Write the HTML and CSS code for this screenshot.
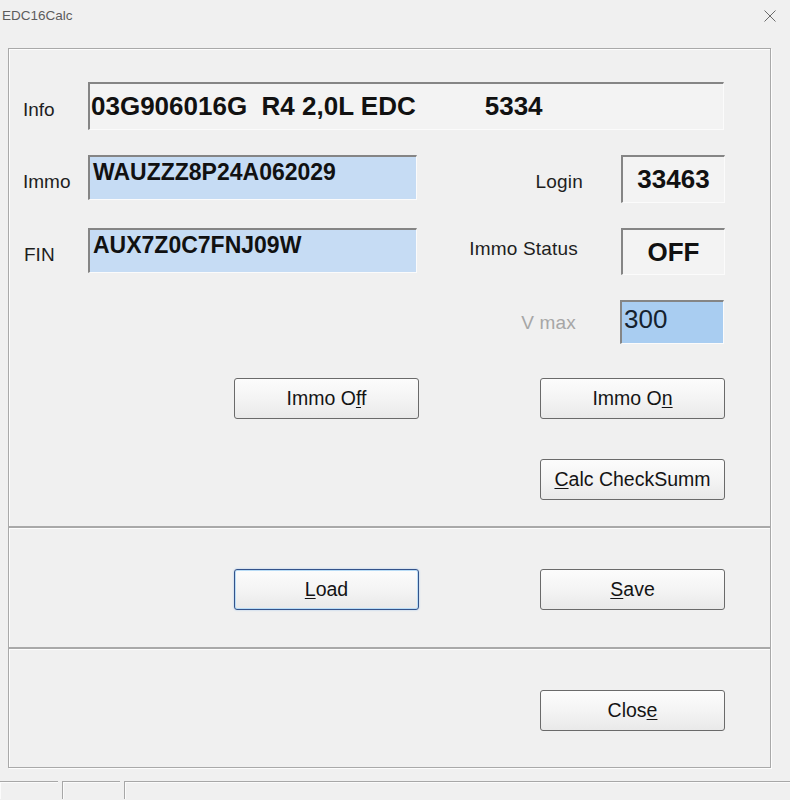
FILE: index.html
```html
<!DOCTYPE html>
<html>
<head>
<meta charset="utf-8">
<title>EDC16Calc</title>
<link rel="stylesheet" href="styles.css">
</head>
<body>
<div class="window">
  <div class="titlebar">
    <span class="title">EDC16Calc</span>
    <svg class="close-x" width="12" height="12" viewBox="0 0 12 12"><path d="M0.5 0.5 L11.5 11.5 M11.5 0.5 L0.5 11.5" stroke="#6a6a6a" stroke-width="1" fill="none"/></svg>
  </div>
  <div class="content">
    <div class="group group-main">
      <div class="row row-info">
        <span class="label label-info">Info</span>
        <div class="field field-info">03G906016G&nbsp;&nbsp;R4 2,0L EDC<span class="info-num">5334</span></div>
      </div>
      <div class="row row-immo">
        <span class="label label-left label-immo">Immo</span>
        <div class="field field-edit field-long">WAUZZZ8P24A062029</div>
        <span class="label label-right label-login">Login</span>
        <div class="field field-value">33463</div>
      </div>
      <div class="row row-fin">
        <span class="label label-left label-fin">FIN</span>
        <div class="field field-edit field-long">AUX7Z0C7FNJ09W</div>
        <span class="label label-right label-status">Immo Status</span>
        <div class="field field-value field-status">OFF</div>
      </div>
      <div class="row row-vmax">
        <span class="label label-right label-vmax">V max</span>
        <div class="field field-vmax">300</div>
      </div>
      <div class="row row-buttons">
        <button class="btn btn-left">Immo O<u>f</u>f</button>
        <button class="btn btn-right">Immo O<u>n</u></button>
      </div>
      <div class="row row-calc">
        <button class="btn btn-right btn-calc"><u>C</u>alc CheckSumm</button>
      </div>
    </div>
    <div class="group group-file">
      <div class="row row-buttons row-file">
        <button class="btn btn-left btn-default"><u>L</u>oad</button>
        <button class="btn btn-right"><u>S</u>ave</button>
      </div>
    </div>
    <div class="group group-close">
      <div class="row row-close">
        <button class="btn btn-right btn-close">Clos<u>e</u></button>
      </div>
    </div>
  </div>
  <div class="statusbar">
    <div class="panel panel-1"></div>
    <div class="panel panel-2"></div>
    <div class="panel panel-3"></div>
  </div>
</div>
</body>
</html>
```
FILE: styles.css
```css
html, body {
  margin: 0;
  padding: 0;
  background: #f0f0f0;
}
body {
  font-family: "Liberation Sans", Arial, sans-serif;
  color: #1e1e1e;
  width: 790px;
  height: 800px;
  overflow: hidden;
}
.window {
  width: 790px;
  height: 800px;
  display: flex;
  flex-direction: column;
}
.titlebar {
  height: 32px;
  display: flex;
  align-items: center;
  justify-content: space-between;
  padding: 0 14px 0 2px;
}
.title {
  font-size: 13.5px;
  color: #5c5c5c;
  margin-top: -1px;
}
.content {
  padding: 16px 0 0 8px;
  width: 763px;
}
.group {
  box-sizing: border-box;
  width: 763px;
  border: 1px solid #a9a9a9;
  box-shadow: 1px 1px 0 #fdfdfd, inset 1px 1px 0 #fdfdfd;
  padding-left: 14px;
  padding-right: 45px;
}
.group-main {
  height: 479px;
  padding-top: 33px;
}
.group-file {
  height: 121px;
  padding-top: 41px;
}
.group-close {
  height: 120px;
  padding-top: 41px;
}
.row {
  display: flex;
  align-items: flex-start;
}
.label {
  font-size: 19px;
  line-height: 22px;
  color: #1e1e1e;
}
.label-info {
  width: 65px;
  margin-top: 17px;
}
.label-left {
  width: 65px;
}
.label-immo { margin-top: 16px; }
.label-fin { margin-top: 16px; padding-left: 1px; width: 64px; }
.label-right {
  flex: 1;
  text-align: right;
  letter-spacing: 0.2px;
}
.label-login { margin-top: 16px; padding-right: 38px; }
.label-status { margin-top: 10px; padding-right: 43px; }
.label-vmax { margin-top: 12px; color: #a6a6a6; padding-right: 44px; }
.field {
  box-sizing: border-box;
  border-top: 2px solid #858585;
  border-left: 2px solid #858585;
  border-right: 1px solid #fbfbfb;
  border-bottom: 1px solid #fbfbfb;
  font-weight: bold;
  white-space: pre;
}
.field-info {
  width: 636px;
  height: 48px;
  background: #f3f3f3;
  font-size: 26px;
  line-height: 45px;
  padding-left: 1px;
  color: #111;
}
.info-num {
  margin-left: 69px;
}
.row-immo { margin-top: 25px; }
.row-fin { margin-top: 25px; }
.field-long {
  width: 329px;
  height: 45px;
}
.field-edit {
  background: #c6dcf4;
  font-size: 23px;
  line-height: 31px;
  padding-left: 3px;
  color: #111;
}
.field-value {
  width: 104px;
  height: 48px;
  background: #f3f3f3;
  font-size: 26px;
  line-height: 44px;
  text-align: center;
  color: #111;
}
.field-status {
  height: 47px;
}
.row-vmax {
  margin-top: 25px;
}
.field-vmax {
  width: 104px;
  height: 44px;
  background: #a9cdf1;
  font-size: 26px;
  font-weight: normal;
  line-height: 34px;
  padding-left: 2px;
  color: #16222e;
  margin-right: 1px;
}
.row-buttons {
  margin-top: 34px;
}
.btn {
  box-sizing: border-box;
  width: 185px;
  height: 41px;
  border: 1px solid #6a6a6a;
  border-radius: 3px;
  background: linear-gradient(#fcfcfc, #f4f4f4 50%, #e9e9e9);
  font-family: "Liberation Sans", Arial, sans-serif;
  font-size: 19.5px;
  color: #141414;
  padding: 0;
  margin: 0;
}
.btn u {
  text-underline-offset: 2px;
}
.btn-left {
  margin-left: 211px;
}
.btn-right {
  margin-left: auto;
}
.row-calc {
  margin-top: 40px;
}
.btn-default {
  border: 1px solid #34538a;
  box-shadow: inset 0 0 0 1px #b9dcf6, 0 0 2px #9cc2ec;
}
.row-file {
  margin-top: 0;
}
.statusbar {
  margin-top: 13px;
  display: flex;
  gap: 4px;
  height: 18px;
}
.panel {
  box-sizing: border-box;
  height: 18px;
  border-top: 1px solid #a7a7a7;
  border-left: 1px solid #a7a7a7;
  box-shadow: inset 1px 1px 0 #fbfbfb;
}
.panel-1 { width: 58px; border-left: none; }
.panel-2 { width: 58px; }
.panel-3 { flex: 1; }
```
